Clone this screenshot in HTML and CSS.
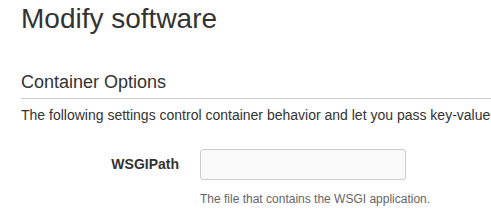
FILE: index.html
```html
<!DOCTYPE html>
<html lang="en">
<head>
<meta charset="UTF-8" />
<title>Modify software</title>
<link rel="stylesheet" href="styles.css">
</head>
<body>

<h1 class="page-title">Modify software</h1>

<div class="section">
    <h2 class="section-title">Container Options</h2>
    <p class="section-desc">The following settings control container behavior and let you pass key-value</p>

    <div class="form-row">
        <label class="form-label" for="wsgi">WSGIPath</label>
        <div class="form-field">
            <input type="text" id="wsgi" class="text-input">
            <div class="help">The file that contains the WSGI application.</div>
        </div>
    </div>
</div>

</body>
</html>
```

FILE: styles.css
```css
body {
    font-family: "Liberation Sans", Arial, sans-serif;
    color: #333;
    background: #fff;
    margin: 0;
    padding: 0 0 0 21px;
    overflow: hidden;
}
.page-title {
    font-size: 28px;
    font-weight: normal;
    line-height: 32px;
    margin: 3px 0 0 0;
    color: #333;
}
.section {
    margin-top: 37px;
}
.section-title {
    font-size: 18px;
    font-weight: normal;
    line-height: 20px;
    margin: 0;
    padding-bottom: 6px;
    border-bottom: 1px solid #ccc;
}
.section-desc {
    font-size: 14px;
    line-height: 20px;
    margin: 6px 0 0 0;
    white-space: nowrap;
}
.form-row {
    display: flex;
    margin-top: 24px;
}
.form-label {
    width: 158px;
    text-align: right;
    font-size: 14px;
    font-weight: bold;
    line-height: 20px;
    padding-top: 5px;
}
.form-field {
    margin-left: 21px;
}
.text-input {
    display: block;
    box-sizing: border-box;
    width: 206px;
    height: 31px;
    margin: 0;
    border: 1px solid #ccc;
    border-radius: 3px;
    background: #fafafa;
}
.help {
    font-size: 12px;
    line-height: 16px;
    color: #666;
    margin-top: 11px;
}
```
